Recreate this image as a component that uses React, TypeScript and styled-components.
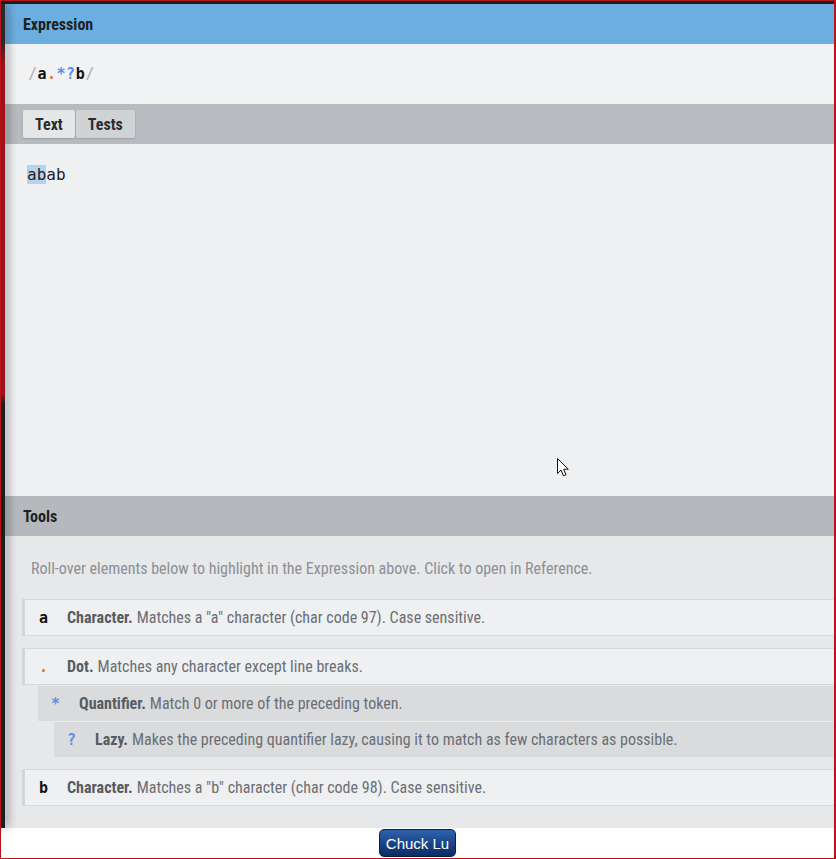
import styled, { createGlobalStyle } from "styled-components";

const GlobalStyle = createGlobalStyle`
  html, body {
    margin: 0;
    padding: 0;
    background: #ffffff;
  }
`;

const condensed = `"Roboto Condensed", "Liberation Sans Narrow", Roboto, sans-serif`;
const mono = `"DejaVu Sans Mono", "Liberation Mono", monospace`;

const Frame = styled.div`
  width: 836px;
  height: 859px;
  box-sizing: border-box;
  border: 1px solid #b8131c;
  border-right-width: 2px;
  display: flex;
  flex-direction: column;
  background: #ffffff;
  overflow: hidden;
  font-family: ${condensed};
  font-stretch: condensed;
`;

const Window = styled.div`
  display: flex;
  border-top: 3px solid #1c1c1c;
`;

const Strip = styled.div`
  width: 4px;
  flex: none;
  background: linear-gradient(#2a2a2a 0, #2a2a2a 40px, #9e1219 60px, #9e1219 390px, #1d1d1d 400px);
  position: relative;
  z-index: 1;
  box-shadow: 3px 0 8px rgba(0, 0, 0, 0.45);
`;

const Panel = styled.div`
  flex: 1;
  min-width: 0;
  display: flex;
  flex-direction: column;
`;

const SectionHeader = styled.div<{ $tone: "blue" | "gray" }>`
  height: 40px;
  display: flex;
  align-items: center;
  padding-left: 18px;
  background: ${(p) => (p.$tone === "blue" ? "#6daee0" : "#b5b9bd")};
  color: #1f2124;
  font-size: 16px;
  font-weight: 700;
`;

const ExpressionBar = styled.div`
  height: 60px;
  display: flex;
  align-items: center;
  padding-left: 23px;
  background: #f1f2f3;
  font-family: ${mono};
  font-size: 15px;
  font-weight: 700;
  letter-spacing: 0.5px;
`;

const Tok = styled.span<{ $c: string }>`
  color: ${(p) => p.$c};
`;

const TabBar = styled.div`
  height: 40px;
  display: flex;
  align-items: center;
  padding-left: 18px;
  gap: 1px;
  background: #b7bbbf;
`;

const Tab = styled.div<{ $active?: boolean }>`
  height: 28px;
  padding: 0 12px;
  display: flex;
  align-items: center;
  font-size: 16px;
  font-weight: 700;
  color: #2a2c30;
  border-radius: 2px;
  background: ${(p) => (p.$active ? "#e5e6e8" : "#d0d3d6")};
  box-shadow: 0 1px 2px rgba(0, 0, 0, 0.15);
`;

const TextArea = styled.div`
  height: 352px;
  box-sizing: border-box;
  position: relative;
  padding: 23px 0 0 22px;
  background: #eff0f2;
  font-family: ${mono};
  font-size: 16px;
  line-height: 16px;
  color: #1f2124;
`;

const Match = styled.span`
  background: #b3d3ee;
`;

const Cursor = styled.svg`
  position: absolute;
  left: 551px;
  top: 313px;
`;

const ToolsBody = styled.div`
  height: 292px;
  box-sizing: border-box;
  padding-top: 23px;
  background: #e7e8ea;
  overflow: hidden;
`;

const Hint = styled.p`
  margin: 0 0 20px 26px;
  font-size: 16px;
  line-height: 20px;
  color: #8b9096;
`;

const Group = styled.div`
  margin: 0 -20px 12px 17px;
`;

const Row = styled.div<{ $depth: number }>`
  height: 35px;
  display: flex;
  align-items: center;
  font-size: 16px;
  white-space: nowrap;
  color: #6a6f75;
  ${(p) =>
    p.$depth === 0
      ? `
    background: #eff0f2;
    border-left: 3px solid #d3d5d8;
    border-top: 1px solid #d6d8da;
    border-bottom: 1px solid #d6d8da;
    padding-left: 14px;
  `
      : `
    background: #dadbdd;
    border-top: 1px solid #eaebec;
    padding-left: 13px;
  `}
`;

const Nested = styled.div`
  margin-left: 16px;
`;

const Glyph = styled.span<{ $c: string }>`
  width: 28px;
  flex: none;
  font-family: ${mono};
  font-weight: 700;
  font-size: 15px;
  color: ${(p) => p.$c};
`;

const Label = styled.b`
  color: #575c62;
  margin-right: 4px;
`;

const Footer = styled.div`
  flex: 1;
  display: flex;
  justify-content: center;
  align-items: center;
  background: #ffffff;
`;

const NameButton = styled.button`
  height: 28px;
  padding: 0 6px;
  border: 1px solid #0b1f3f;
  border-radius: 5px;
  background: linear-gradient(#2f62ad, #1a4688 50%, #0c2d62);
  color: #ffffff;
  font-family: "Liberation Sans", Arial, sans-serif;
  font-size: 15px;
`;

type Token = {
  glyph: string;
  color: string;
  label: string;
  desc: string;
  children?: Token[];
};

const tokens: Token[] = [
  {
    glyph: "a",
    color: "#111",
    label: "Character.",
    desc: 'Matches a "a" character (char code 97). Case sensitive.',
  },
  {
    glyph: ".",
    color: "#e07a1f",
    label: "Dot.",
    desc: "Matches any character except line breaks.",
    children: [
      {
        glyph: "*",
        color: "#5b8ef2",
        label: "Quantifier.",
        desc: "Match 0 or more of the preceding token.",
        children: [
          {
            glyph: "?",
            color: "#5b8ef2",
            label: "Lazy.",
            desc: "Makes the preceding quantifier lazy, causing it to match as few characters as possible.",
          },
        ],
      },
    ],
  },
  {
    glyph: "b",
    color: "#111",
    label: "Character.",
    desc: 'Matches a "b" character (char code 98). Case sensitive.',
  },
];

const TokenRow = ({ token, depth }: { token: Token; depth: number }) => (
  <>
    <Row $depth={depth}>
      <Glyph $c={token.color}>{token.glyph}</Glyph>
      <Label>{token.label}</Label>
      {token.desc}
    </Row>
    {token.children && (
      <Nested>
        {token.children.map((c, i) => (
          <TokenRow key={i} token={c} depth={depth + 1} />
        ))}
      </Nested>
    )}
  </>
);

const App = () => {
  return (
    <Frame>
      <GlobalStyle />
      <Window>
        <Strip />
        <Panel>
          <SectionHeader $tone="blue">Expression</SectionHeader>
          <ExpressionBar>
            <Tok $c="#b3b6ba">/</Tok>
            <Tok $c="#111">a</Tok>
            <Tok $c="#e07a1f">.</Tok>
            <Tok $c="#5b8ef2">*?</Tok>
            <Tok $c="#111">b</Tok>
            <Tok $c="#b3b6ba">/</Tok>
          </ExpressionBar>
          <TabBar>
            <Tab $active>Text</Tab>
            <Tab>Tests</Tab>
          </TabBar>
          <TextArea>
            <Match>ab</Match>ab
            <Cursor width="14" height="21" viewBox="0 0 14 21">
              <path
                d="M1.5 1.5 L1.5 16.5 L5 13 L7.5 18.8 L10 17.7 L7.6 12.2 L12.3 12.2 Z"
                fill="#ffffff"
                stroke="#111"
                strokeWidth="1"
                strokeLinejoin="miter"
              />
            </Cursor>
          </TextArea>
          <SectionHeader $tone="gray">Tools</SectionHeader>
          <ToolsBody>
            <Hint>
              Roll-over elements below to highlight in the Expression above.
              Click to open in Reference.
            </Hint>
            {tokens.map((t, i) => (
              <Group key={i}>
                <TokenRow token={t} depth={0} />
              </Group>
            ))}
          </ToolsBody>
        </Panel>
      </Window>
      <Footer>
        <NameButton>Chuck Lu</NameButton>
      </Footer>
    </Frame>
  );
};

export default App;
